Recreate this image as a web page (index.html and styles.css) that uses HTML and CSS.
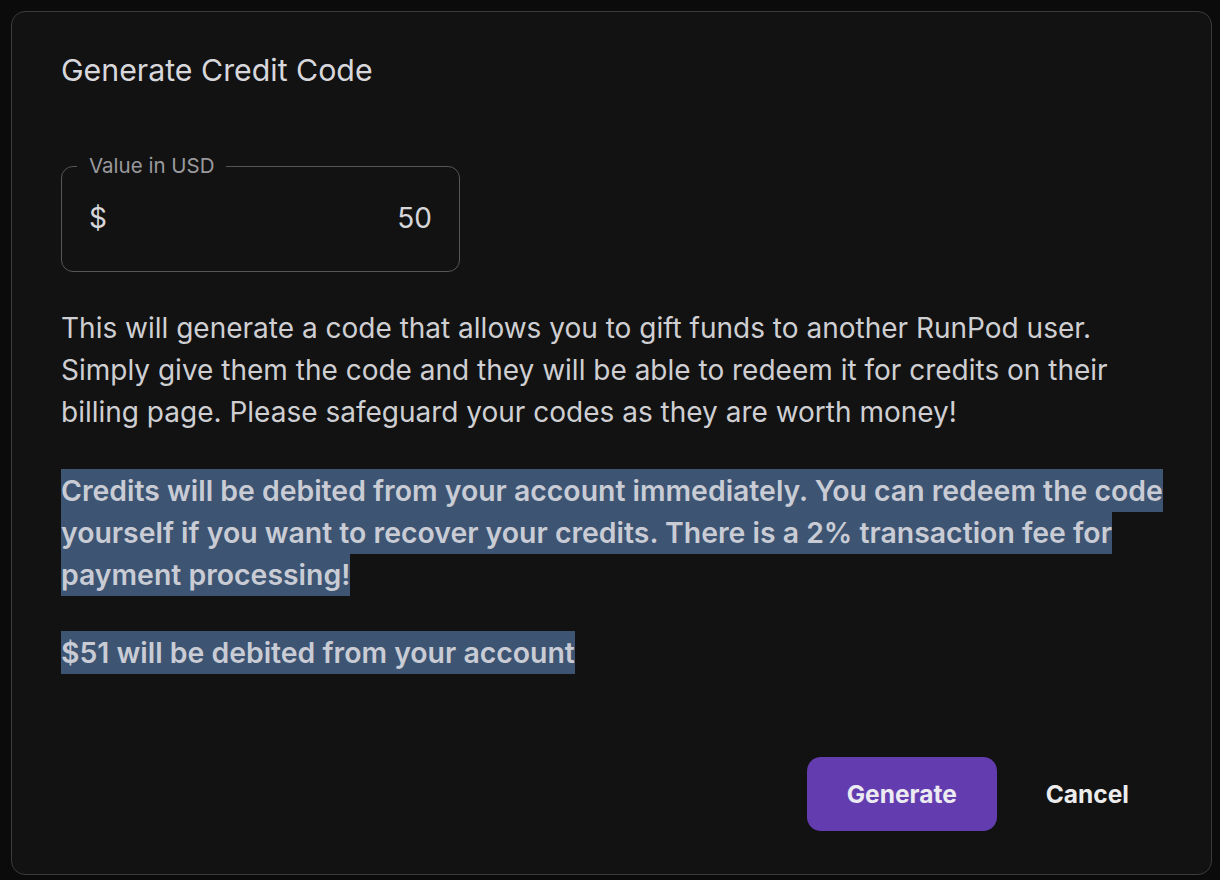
FILE: index.html
```html
<!DOCTYPE html>
<html>
<head>
<meta charset="utf-8">
<link rel="stylesheet" href="styles.css">
</head>
<body>
<div class="dialog">
  <h2 class="title">Generate Credit Code</h2>
  <fieldset class="field">
    <legend class="legend">Value in USD</legend>
    <div class="field-row">
      <span class="prefix">$</span>
      <span class="value">50</span>
    </div>
  </fieldset>
  <p class="desc">This will generate a code that allows you to gift funds to another RunPod user. Simply give them the code and they will be able to redeem it for credits on their billing page. Please safeguard your codes as they are worth money!</p>
  <p class="strong"><span class="sel">Credits will be debited from your account immediately. You can redeem the code yourself if you want to recover your credits. There is a 2% transaction fee for payment processing! </span></p>
  <p class="strong"><span class="sel">$51 will be debited from your account</span></p>
  <div class="actions">
    <button class="btn btn-primary">Generate</button>
    <button class="btn btn-text">Cancel</button>
  </div>
</div>
</body>
</html>
```
FILE: styles.css
```css
* { box-sizing: border-box; }
html, body { margin: 0; padding: 0; }
body {
  background: #0b0b0b;
  font-family: Inter, "Noto Sans", sans-serif;
  width: 1220px;
  height: 880px;
  overflow: hidden;
}
.dialog {
  margin: 11px 0 0 11px;
  width: 1201px;
  height: 864px;
  background: #121212;
  border: 1.5px solid #3b3b3d;
  border-radius: 14px;
  padding: 38px 42px 0 49px;
  display: flex;
  flex-direction: column;
}
.title {
  margin: 0;
  font-size: 30.3px;
  line-height: 40px;
  font-weight: 400;
  color: #d8d8dc;
}
.field {
  margin: 64px 0 0 0;
  width: 399px;
  height: 118px;
  border: 1.5px solid #565658;
  border-radius: 12px;
  padding: 0 15px;
}
.legend {
  padding: 0 12px;
  margin-left: 0;
  font-size: 20.5px;
  line-height: 24px;
  color: #9a9a9e;
}
.field-row {
  display: flex;
  justify-content: space-between;
  align-items: center;
  padding: 23px 12px 0 12px;
  font-size: 28px;
  line-height: 34px;
  color: #d6d6da;
}
.desc {
  margin: 35px 0 0 0;
  font-size: 28px;
  line-height: 42px;
  color: #cfcfd3;
  max-width: 1100px;
}
.strong {
  margin: 37px 0 0 0;
  font-size: 28.4px;
  line-height: 42px;
  font-weight: 600;
  color: #c9ccd4;
}
.strong + .strong { margin-top: 36px; }
.sel {
  background: #3d5473;
  padding: 4px 0 4px 0;
}
.actions {
  margin-top: auto;
  margin-bottom: 43px;
  display: flex;
  justify-content: flex-end;
  gap: 9px;
}
.btn {
  font-family: Inter, "Noto Sans", sans-serif;
  font-size: 24.5px;
  font-weight: 700;
  line-height: 30px;
  border: none;
  border-radius: 14px;
  padding: 22px 40px;
  cursor: pointer;
}
.btn-primary {
  background: #633db0;
  color: #ecebf2;
}
.btn-text {
  background: transparent;
  color: #ececec;
}
```
